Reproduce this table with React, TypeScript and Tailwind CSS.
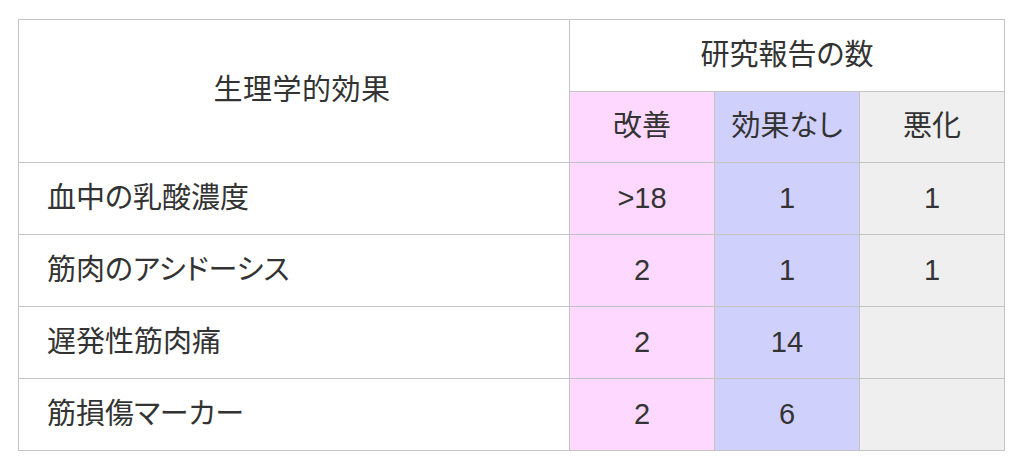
import React from "react";

const rows = [
  { label: "血中の乳酸濃度", good: ">18", none: "1", bad: "1" },
  { label: "筋肉のアシドーシス", good: "2", none: "1", bad: "1" },
  { label: "遅発性筋肉痛", good: "2", none: "14", bad: "" },
  { label: "筋損傷マーカー", good: "2", none: "6", bad: "" },
];

const cell = "border border-[#c4c4c4] text-center align-middle";

export default function App() {
  return (
    <div
      className="w-[1024px] h-[470px] bg-white pt-[19px] pl-[18px] text-[#333] text-[29px] [font-feature-settings:'palt']"
      style={{ fontFamily: '"Liberation Sans", "Noto Sans CJK JP", sans-serif' }}
    >
      <table className="border-collapse table-fixed w-[986px]">
        <colgroup>
          <col className="w-[551px]" />
          <col className="w-[145px]" />
          <col className="w-[145px]" />
          <col className="w-[145px]" />
        </colgroup>
        <thead>
          <tr className="h-[72px]">
            <th rowSpan={2} className={`${cell} font-normal pl-[16px] tracking-[0.5px]`}>
              生理学的効果
            </th>
            <th colSpan={3} className={`${cell} font-normal`}>
              研究報告の数
            </th>
          </tr>
          <tr className="h-[71px]">
            <th className={`${cell} font-normal bg-[#fed8fe]`}>改善</th>
            <th className={`${cell} font-normal bg-[#d0d0fd]`}>効果なし</th>
            <th className={`${cell} font-normal bg-[#efefef]`}>悪化</th>
          </tr>
        </thead>
        <tbody>
          {rows.map((r) => (
            <tr key={r.label} className="h-[72px]">
              <td className="border border-[#c4c4c4] align-middle pl-[28px]">{r.label}</td>
              <td className={`${cell} bg-[#fed8fe]`}>{r.good}</td>
              <td className={`${cell} bg-[#d0d0fd]`}>{r.none}</td>
              <td className={`${cell} bg-[#efefef]`}>{r.bad}</td>
            </tr>
          ))}
        </tbody>
      </table>
    </div>
  );
}
